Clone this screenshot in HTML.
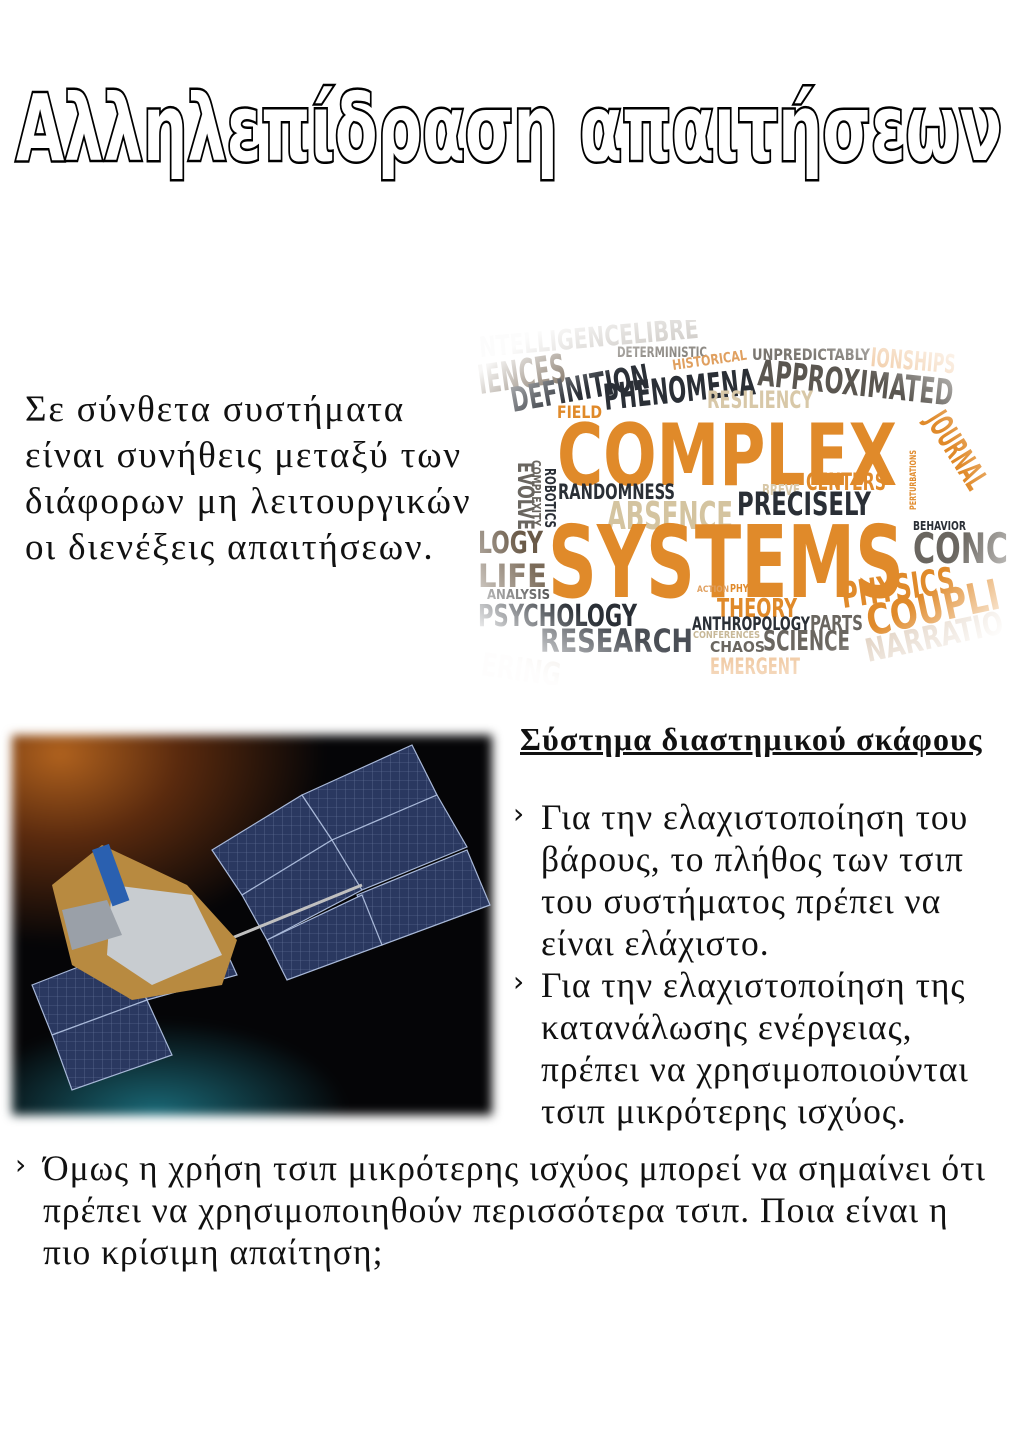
<!DOCTYPE html>
<html><head><meta charset="utf-8"><style>
html,body{margin:0;padding:0;background:#fff;}
body{width:1024px;height:1448px;position:relative;overflow:hidden;font-family:"Liberation Serif","DejaVu Serif",serif;color:#111;}
.abs{position:absolute;}
.p{font-size:37px;line-height:46px;left:25px;top:387px;letter-spacing:1.8px;white-space:nowrap;}
.h{left:520px;top:721px;font-size:32px;font-weight:bold;text-decoration:underline;white-space:nowrap;letter-spacing:1.2px;}
.bl{font-size:35.5px;line-height:42px;letter-spacing:1px;white-space:nowrap;}
.bl .it{position:relative;padding-left:28px;}
.bl .it:before{content:"›";position:absolute;left:0;top:-3px;font-size:28px;font-family:"DejaVu Sans",sans-serif;}
</style></head><body>

<svg class="abs" style="left:0;top:80px" width="1024" height="110">
<text x="16" y="80" textLength="986" lengthAdjust="spacingAndGlyphs" font-family="DejaVu Sans, sans-serif" font-weight="bold" font-size="92" fill="#fff" stroke="#000" stroke-width="5" paint-order="stroke">Αλληλεπίδραση απαιτήσεων</text>
</svg>

<div class="abs p">Σε σύνθετα συστήματα<br>είναι συνήθεις μεταξύ των<br>διάφορων μη λειτουργικών<br>οι διενέξεις απαιτήσεων.</div>

<svg class="abs" style="left:470px;top:320px" width="540" height="365" viewBox="470 320 540 365" font-family="DejaVu Sans Condensed, DejaVu Sans, sans-serif" font-weight="bold">
<defs><radialGradient id="fade" cx="0.5" cy="0.5" r="0.6"><stop offset="0.7" stop-color="#fff" stop-opacity="0"/><stop offset="1" stop-color="#fff" stop-opacity="0.95"/></radialGradient></defs>
<g>
<text x="480" y="357" font-size="28" fill="#c8c4bf" textLength="220" lengthAdjust="spacingAndGlyphs" transform="rotate(-5 480 357)">NTELLIGENCELIBRE</text>
<text x="617" y="357" font-size="14" fill="#8a8680" textLength="90" lengthAdjust="spacingAndGlyphs">DETERMINISTIC</text>
<text x="673" y="370" font-size="14" fill="#e0a060" textLength="75" lengthAdjust="spacingAndGlyphs" transform="rotate(-8 673 370)">HISTORICAL</text>
<text x="752" y="360" font-size="16" fill="#7a7670" textLength="118" lengthAdjust="spacingAndGlyphs">UNPREDICTABLY</text>
<text x="870" y="366" font-size="26" fill="#f0c8a0" textLength="85" lengthAdjust="spacingAndGlyphs" transform="rotate(5 870 366)">IONSHIPS</text>
<text x="480" y="394" font-size="40" fill="#6a5a48" textLength="88" lengthAdjust="spacingAndGlyphs" transform="rotate(-8 480 394)">IENCES</text>
<text x="513" y="412" font-size="34" fill="#2a2f36" textLength="140" lengthAdjust="spacingAndGlyphs" transform="rotate(-10 513 412)">DEFINITION</text>
<text x="605" y="410" font-size="36" fill="#2a2f36" textLength="152" lengthAdjust="spacingAndGlyphs" transform="rotate(-6 605 410)">PHENOMENA</text>
<text x="757" y="385" font-size="36" fill="#5a5650" textLength="196" lengthAdjust="spacingAndGlyphs" transform="rotate(6 757 385)">APPROXIMATED</text>
<text x="707" y="408" font-size="24" fill="#d8c8a8" textLength="106" lengthAdjust="spacingAndGlyphs">RESILIENCY</text>
<text x="557" y="418" font-size="17" fill="#e08a2a" textLength="45" lengthAdjust="spacingAndGlyphs">FIELD</text>
<text x="557" y="485" font-size="86" fill="#e08a2a" textLength="340" lengthAdjust="spacingAndGlyphs">COMPLEX</text>
<text x="925" y="420" font-size="32" fill="#e08a2a" textLength="85" lengthAdjust="spacingAndGlyphs" transform="rotate(58 925 420)">JOURNAL</text>
<text x="916" y="510" font-size="9" fill="#e08a2a" textLength="60" lengthAdjust="spacingAndGlyphs" transform="rotate(-90 916 510)">PERTURBATIONS</text>
<text x="806" y="490" font-size="24" fill="#e08a2a" textLength="80" lengthAdjust="spacingAndGlyphs">CENTERS</text>
<text x="762" y="495" font-size="15" fill="#d8c8a8" textLength="38" lengthAdjust="spacingAndGlyphs">BREVE</text>
<text x="558" y="499" font-size="21" fill="#2a2f36" textLength="117" lengthAdjust="spacingAndGlyphs">RANDOMNESS</text>
<text x="607" y="529" font-size="38" fill="#d4c4a0" textLength="126" lengthAdjust="spacingAndGlyphs">ABSENCE</text>
<text x="737" y="515" font-size="32" fill="#2a2f36" textLength="134" lengthAdjust="spacingAndGlyphs">PRECISELY</text>
<text x="518" y="462" font-size="22" fill="#6a6660" textLength="68" lengthAdjust="spacingAndGlyphs" transform="rotate(90 518 462)">EVOLVE</text>
<text x="532" y="460" font-size="12" fill="#6a6660" textLength="66" lengthAdjust="spacingAndGlyphs" transform="rotate(90 532 460)">COMPLEXITY</text>
<text x="545" y="468" font-size="15" fill="#2a2f36" textLength="60" lengthAdjust="spacingAndGlyphs" transform="rotate(90 545 468)">ROBOTICS</text>
<text x="913" y="530" font-size="12" fill="#2a2f36" textLength="53" lengthAdjust="spacingAndGlyphs">BEHAVIOR</text>
<text x="913" y="563" font-size="42" fill="#6a6660" textLength="95" lengthAdjust="spacingAndGlyphs">CONC</text>
<text x="548" y="597" font-size="100" fill="#e08a2a" textLength="356" lengthAdjust="spacingAndGlyphs">SYSTEMS</text>
<text x="478" y="553" font-size="30" fill="#6a5a48" textLength="65" lengthAdjust="spacingAndGlyphs">LOGY</text>
<text x="478" y="587" font-size="32" fill="#7a6a58" textLength="69" lengthAdjust="spacingAndGlyphs">LIFE</text>
<text x="487" y="599" font-size="13" fill="#4a4a4a" textLength="63" lengthAdjust="spacingAndGlyphs">ANALYSIS</text>
<text x="478" y="626" font-size="30" fill="#2a2f36" textLength="159" lengthAdjust="spacingAndGlyphs">PSYCHOLOGY</text>
<text x="540" y="652" font-size="32" fill="#4a4e55" textLength="153" lengthAdjust="spacingAndGlyphs">RESEARCH</text>
<text x="697" y="592" font-size="9" fill="#e0a060" textLength="32" lengthAdjust="spacingAndGlyphs">ACTION</text>
<text x="730" y="592" font-size="11" fill="#e08a2a" textLength="45" lengthAdjust="spacingAndGlyphs">PHYSICAL</text>
<text x="717" y="617" font-size="26" fill="#e08a2a" textLength="80" lengthAdjust="spacingAndGlyphs">THEORY</text>
<text x="843" y="608" font-size="36" fill="#e08a2a" textLength="114" lengthAdjust="spacingAndGlyphs" transform="rotate(-8 843 608)">PHYSICS</text>
<text x="870" y="636" font-size="42" fill="#e08a2a" textLength="135" lengthAdjust="spacingAndGlyphs" transform="rotate(-12 870 636)">COUPLI</text>
<text x="692" y="630" font-size="19" fill="#2a2f36" textLength="118" lengthAdjust="spacingAndGlyphs">ANTHROPOLOGY</text>
<text x="810" y="630" font-size="20" fill="#6a6660" textLength="53" lengthAdjust="spacingAndGlyphs">PARTS</text>
<text x="693" y="638" font-size="10" fill="#c8b898" textLength="67" lengthAdjust="spacingAndGlyphs">CONFERENCES</text>
<text x="710" y="652" font-size="15" fill="#6a6660" textLength="55" lengthAdjust="spacingAndGlyphs">CHAOS</text>
<text x="763" y="650" font-size="28" fill="#6a6660" textLength="87" lengthAdjust="spacingAndGlyphs">SCIENCE</text>
<text x="868" y="662" font-size="32" fill="#e0d0c0" textLength="140" lengthAdjust="spacingAndGlyphs" transform="rotate(-12 868 662)">NARRATIO</text>
<text x="710" y="674" font-size="22" fill="#f0c8a0" textLength="90" lengthAdjust="spacingAndGlyphs">EMERGENT</text>
<text x="480" y="675" font-size="32" fill="#e8e0d8" textLength="80" lengthAdjust="spacingAndGlyphs" transform="rotate(8 480 675)">ERING</text>
</g>
<rect x="470" y="320" width="540" height="365" fill="url(#fade)"/>
</svg>

<div class="abs" style="left:12px;top:735px;width:480px;height:380px;background:radial-gradient(ellipse 55% 50% at 10% 5%,#b0621e 0%,#5a2a0e 45%,rgba(0,0,0,0) 100%),radial-gradient(ellipse 40% 25% at 30% 100%,#1a6a78 0%,rgba(0,0,0,0) 100%),#050507;filter:blur(5px);"></div>
<svg class="abs" style="left:12px;top:735px" width="480" height="380">
<defs><pattern id="grid" width="9" height="9" patternUnits="userSpaceOnUse"><rect width="9" height="9" fill="#2a3860"/><path d="M0 0H9M0 0V9" stroke="#6a7aa0" stroke-width="0.6"/></pattern></defs>
<g fill="url(#grid)" stroke="#a8b8d8" stroke-width="1.2">
<polygon points="200,115 290,60 320,105 230,160"/>
<polygon points="290,60 400,10 425,60 320,105"/>
<polygon points="230,160 320,105 350,155 255,205"/>
<polygon points="320,105 425,60 455,112 350,155"/>
<polygon points="345,160 455,115 478,170 370,210"/>
<polygon points="255,205 350,160 370,210 275,245"/>
<polygon points="20,250 110,215 135,265 40,300"/>
<polygon points="40,300 135,265 160,320 60,355"/>
<polygon points="110,215 200,185 225,240 135,265"/>
</g>
<line x1="215" y1="205" x2="350" y2="150" stroke="#c0c0c0" stroke-width="3"/>
<polygon points="40,150 90,110 175,150 225,205 210,250 120,265 60,230" fill="#b88a40"/>
<polygon points="100,150 180,160 210,220 140,250 95,220" fill="#c8ccd0"/>
<rect x="80" y="115" width="18" height="60" fill="#2a60b0" transform="rotate(-20 80 115)"/>
<polygon points="50,175 95,165 110,200 60,215" fill="#9aa0a8"/>
</svg>

<div class="abs h">Σύστημα διαστημικού σκάφους</div>
<div class="abs bl" style="left:513px;top:796px;width:500px;">
<div class="it">Για την ελαχιστοποίηση του<br>βάρους, το πλήθος των τσιπ<br>του συστήματος πρέπει να<br>είναι ελάχιστο.</div>
<div class="it">Για την ελαχιστοποίηση της<br>κατανάλωσης ενέργειας,<br>πρέπει να χρησιμοποιούνται<br>τσιπ μικρότερης ισχύος.</div>
</div>
<div class="abs bl" style="left:15px;top:1147px;width:1005px;">
<div class="it">Όμως η χρήση τσιπ μικρότερης ισχύος μπορεί να σημαίνει ότι<br>πρέπει να χρησιμοποιηθούν περισσότερα τσιπ. Ποια είναι η<br>πιο κρίσιμη απαίτηση;</div>
</div>
</body></html>
